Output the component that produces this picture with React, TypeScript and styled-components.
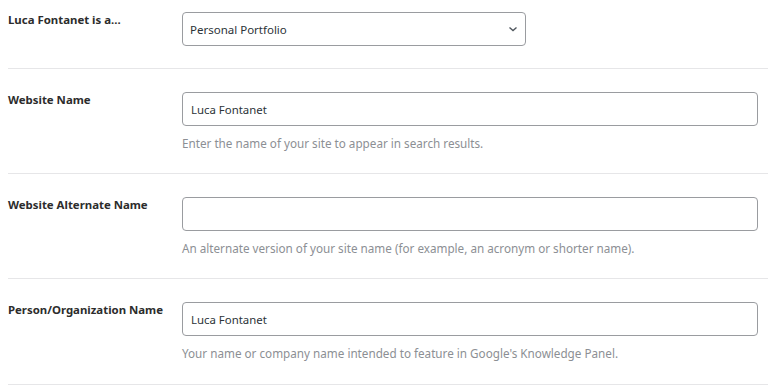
import React from 'react';
import styled, { createGlobalStyle } from 'styled-components';

const GlobalStyle = createGlobalStyle`
  body {
    margin: 0;
    background: #ffffff;
    font-family: "Noto Sans", "Open Sans", sans-serif;
  }
`;

const Table = styled.div`
  margin-left: 8px;
  display: flex;
  flex-direction: column;
`;

const Row = styled.div<{ $first?: boolean; $last?: boolean }>`
  display: grid;
  grid-template-columns: 174px 1fr;
  padding: ${(props) => (props.$first ? '12px 10px 22px 0' : props.$last ? '23px 10px 22px 0' : '23px 10px 21px 0')};
  border-bottom: 1px solid #e6e6e8;
`;

const Label = styled.label`
  font-size: 11.4px;
  line-height: 14px;
  font-weight: 700;
  color: #2c2c2c;
  padding-top: 1px;
`;

const Field = styled.div`
  display: flex;
  flex-direction: column;
`;

const Input = styled.input`
  box-sizing: border-box;
  width: 100%;
  height: 34px;
  padding: 0 8px;
  border: 1px solid #9a9ca0;
  border-radius: 4px;
  font-family: inherit;
  font-size: 11.4px;
  color: #2c3338;
  background: #fff;
  outline: none;
`;

const SelectBox = styled.div`
  box-sizing: border-box;
  width: 344px;
  height: 34px;
  padding: 0 7px 0 7px;
  border: 1px solid #9a9ca0;
  border-radius: 4px;
  display: flex;
  align-items: center;
  justify-content: space-between;
  font-size: 11.5px;
  color: #2c3338;
`;

const Help = styled.p`
  margin: 8px 0 0 0;
  font-size: 11.7px;
  line-height: 18px;
  color: #8c8f94;
`;

const Chevron = () => (
  <svg width="10" height="10" viewBox="0 0 10 10">
    <path d="M1.5 3.5 L5 6.5 L8.5 3.5" fill="none" stroke="#50575e" strokeWidth="1.4" />
  </svg>
);

const App = () => {
  return (
    <>
      <GlobalStyle />
      <Table>
        <Row $first>
          <Label>Luca Fontanet is a...</Label>
          <Field>
            <SelectBox>
              <span>Personal Portfolio</span>
              <Chevron />
            </SelectBox>
          </Field>
        </Row>
        <Row>
          <Label>Website Name</Label>
          <Field>
            <Input defaultValue="Luca Fontanet" />
            <Help>Enter the name of your site to appear in search results.</Help>
          </Field>
        </Row>
        <Row>
          <Label>Website Alternate Name</Label>
          <Field>
            <Input defaultValue="" />
            <Help>An alternate version of your site name (for example, an acronym or shorter name).</Help>
          </Field>
        </Row>
        <Row $last>
          <Label>Person/Organization Name</Label>
          <Field>
            <Input defaultValue="Luca Fontanet" />
            <Help>Your name or company name intended to feature in Google's Knowledge Panel.</Help>
          </Field>
        </Row>
      </Table>
    </>
  );
};

export default App;
